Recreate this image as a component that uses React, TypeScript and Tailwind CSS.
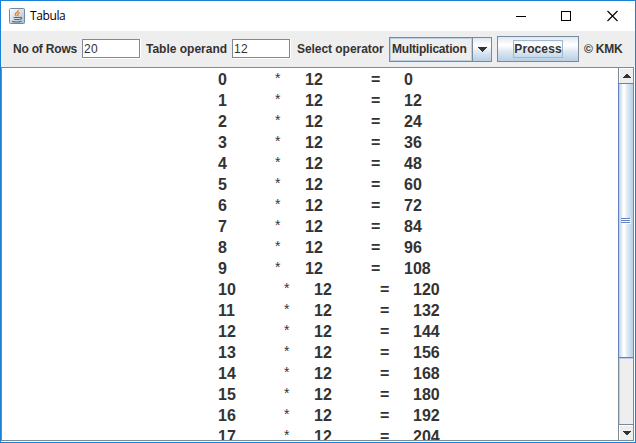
const operand = 12;
const rows = Array.from({ length: 18 }, (_, i) => i);

function JavaIcon() {
  return (
    <svg width="16" height="16" viewBox="0 0 16 16">
      <defs>
        <linearGradient id="cup" x1="0" y1="0" x2="1" y2="1">
          <stop offset="0" stopColor="#ffffff" />
          <stop offset="1" stopColor="#a9bccd" />
        </linearGradient>
      </defs>
      <rect x="0.5" y="0.5" width="15" height="15" rx="1" fill="url(#cup)" stroke="#7089a0" />
      <path d="M9.300 2C9.800 4 6 4.800 6.300 6.400c.1.800 1 1.300 1.200 1.900M10.500 4.300C7.800 5.500 9.800 6.600 8.500 8.100" fill="none" stroke="#ea7a25" strokeWidth="1.300" />
      <path d="M4.500 9.500h6.500M5 11.500h5.500M3 13.400c3 .8 7 .8 9.500-.2M11 9.300c2.200-.3 2.200 1.600-.2 2.100" fill="none" stroke="#44718f" strokeWidth="1.100" />
    </svg>
  );
}

function TitleBar() {
  return (
    <div className="flex h-[30px] shrink-0 items-center bg-white pl-2">
      <JavaIcon />
      <span className="ml-[5px] font-['Open_Sans',sans-serif] text-[12px] leading-4 tracking-[-0.4px] text-black">Tabula</span>
      <svg className="ml-auto mr-[17px]" width="103" height="12" viewBox="0 0 103 12" fill="none" stroke="#000" shapeRendering="crispEdges">
        <path d="M1 6.500h10" />
        <rect x="46.500" y="1.500" width="9" height="9" />
        <path d="M92.500 1l10 10M102.500 1l-10 10" shapeRendering="auto" strokeWidth="1.100" />
      </svg>
    </div>
  );
}

function Field({ value }: { value: string }) {
  return (
    <div className="h-5 w-[59px] shrink-0 border-b border-r border-white">
      <div className="flex h-[19px] w-[58px] items-center border border-[#7a8a99] bg-white pl-px text-[12px] font-normal leading-none tracking-[0.3px]">
        {value}
      </div>
    </div>
  );
}

const metal = "bg-[linear-gradient(180deg,#dde8f3_0%,#ffffff_30%,#ffffff_35%,#dde8f3_60%,#b8cfe5_100%)]";

function Toolbar() {
  return (
    <div className="flex h-9 shrink-0 items-center bg-[#eeeeee] pl-3 text-[12px] font-bold leading-4">
      <span className="w-[69px] shrink-0 whitespace-nowrap tracking-[-0.2px]">No of Rows</span>
      <Field value="20" />
      <span className="ml-[5px] w-[86px] shrink-0 whitespace-nowrap">Table operand</span>
      <Field value="12" />
      <span className="ml-[6px] w-[92px] shrink-0 whitespace-nowrap tracking-[-0.05px]">Select operator</span>
      <div className="flex h-[25px] w-[103px] shrink-0 border border-[#7a8a99]">
        <div className="flex w-[82px] shrink-0 items-center border border-[#b8cfe5] pl-px tracking-[-0.2px]">Multiplication</div>
        <div className={`flex grow items-center justify-center border-l border-[#7a8a99] ${metal}`}>
          <svg width="10" height="5" viewBox="0 0 10 5" shapeRendering="crispEdges"><path d="M0 0h10L5 5z" fill="#333" /></svg>
        </div>
      </div>
      <div className={`ml-[5px] flex h-[26px] w-[82px] shrink-0 items-center justify-center border border-[#7a8a99] ${metal}`}>
        <span className="flex h-[18px] w-[50px] items-center justify-center border border-[#a3b8cc] tracking-[0.1px]">Process</span>
      </div>
      <span className="ml-[5px] whitespace-nowrap tracking-[-0.2px]">© KMK</span>
    </div>
  );
}

function Arrow({ down = false }: { down?: boolean }) {
  return (
    <div className="flex h-[15px] shrink-0 items-center justify-center border-l border-t border-white bg-[#eeeeee]">
      <svg className={down ? "rotate-180" : ""} width="8" height="4" viewBox="0 0 8 4" shapeRendering="crispEdges">
        <path d="M3 0h2v1h1v1h1v1h1v1H0V3h1V2h1V1h1z" fill="#333" />
      </svg>
    </div>
  );
}

function ScrollBar() {
  return (
    <div className="flex w-[15px] shrink-0 flex-col border-l border-[#7a8a99] bg-[#eeeeee]">
      <Arrow />
      <div className="-ml-px flex h-[275px] shrink-0 items-center justify-center border-y border-l border-[#6382bf] bg-[linear-gradient(90deg,#b8cfe5_0%,#dde8f3_15%,#ffffff_32%,#ffffff_38%,#dde8f3_62%,#b8cfe5_100%)]">
        <svg width="10" height="6" viewBox="0 0 10 6" shapeRendering="crispEdges">
          <path d="M1 1.500h9M1 3.500h9M1 5.500h9" stroke="#fff" />
          <path d="M0 .5h9M0 2.500h9M0 4.500h9" stroke="#6382bf" />
        </svg>
      </div>
      <div className="grow border-l border-t border-[#b8cfe5]" />
      <div className="border-t border-[#7a8a99]"><Arrow down /></div>
    </div>
  );
}

export default function App() {
  return (
    <div className="flex h-[443px] w-[636px] flex-col overflow-hidden border border-[#1a80d3] bg-white font-['Liberation_Sans',Arial,sans-serif] text-[#333333]">
      <TitleBar />
      <Toolbar />
      <div className="mb-px mr-px flex h-[374px] shrink-0 border border-[#7a8a99] bg-white">
        <div className="grow overflow-hidden pl-[216px] pt-px text-[16px] font-bold">
          {rows.map((n) => (
            <div key={n} className="flex h-[21px] items-center whitespace-pre leading-[21px]">
              <span className={n < 10 ? "w-[57px]" : "w-[66px]"}>{n}</span>
              <span className="w-[30px] pb-[3px] text-[14px] font-normal leading-[18px]">*</span>
              <span className="w-[66px]">{operand}</span>
              <span className="w-[33px]">=</span>
              <span>{n * operand}</span>
            </div>
          ))}
        </div>
        <ScrollBar />
      </div>
    </div>
  );
}
